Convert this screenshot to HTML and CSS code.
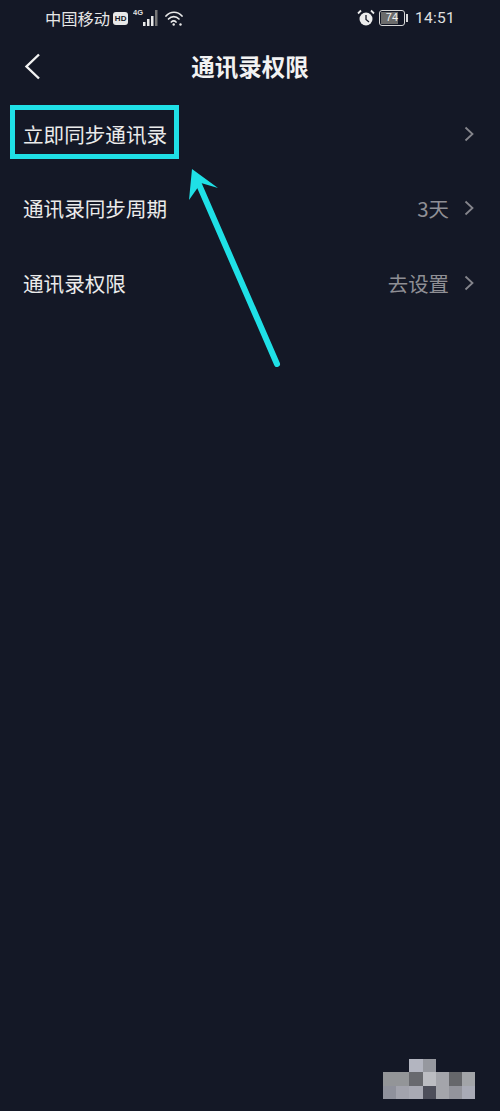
FILE: index.html
```html
<!DOCTYPE html>
<html lang="zh">
<head>
<meta charset="utf-8">
<title>通讯录权限</title>
<link rel="stylesheet" href="styles.css">
</head>
<body>
<div class="screen">
  <div class="status">
    <div class="status-left">
      <span class="carrier">中国移动</span>
      <span class="hd">HD</span>
      <svg class="signal" width="27" height="20" viewBox="0 0 27 20">
        <text x="0" y="7" class="net">4G</text>
        <rect x="10" y="14" width="2.500" height="4" fill="#e8e8e8"/>
        <rect x="14" y="11" width="2.500" height="7" fill="#e8e8e8"/>
        <rect x="18" y="8" width="2.500" height="10" fill="#e8e8e8"/>
        <rect x="22" y="2" width="2.500" height="16" fill="#777"/>
      </svg>
      <svg class="wifi" width="19" height="17" viewBox="0 0 19 17" fill="none" stroke="#e8e8e8" stroke-width="1.700" stroke-linecap="round">
        <path d="M1 6C5.500 1 12.500 1 17 6"/>
        <path d="M3.500 9C6.500 5.800 11 5.800 14 9"/>
        <path d="M6.300 12C7.800 10.500 9.700 10.500 11 12"/>
        <circle cx="8.700" cy="14.500" r="1.200" fill="#e8e8e8" stroke="none"/>
        <circle cx="15.500" cy="14.500" r="1.200" fill="#e8e8e8" stroke="none"/>
      </svg>
    </div>
    <div class="status-right">
      <svg class="alarm" width="18" height="18" viewBox="0 0 18 18">
        <circle cx="9" cy="10" r="6.500" fill="#ececec"/>
        <path d="M9 6V10.500L12 13" fill="none" stroke="#141826" stroke-width="1.300"/>
        <path d="M1 4.500L4 1.500M17 4.500L14 1.500" stroke="#ececec" stroke-width="1.800"/>
      </svg>
      <div class="battery-wrap">
        <div class="battery"><span class="battery-fill"></span><span class="battery-num">74</span></div>
        <span class="battery-cap"></span>
      </div>
      <span class="clock">14:51</span>
    </div>
  </div>

  <header class="nav">
    <svg class="back" width="17" height="27" viewBox="0 0 17 27" fill="none" stroke="#f2f2f2" stroke-width="2.400">
      <path d="M15 1.500L2.500 13.500L15 25.500"/>
    </svg>
    <h1 class="title">通讯录权限</h1>
  </header>

  <ul class="list">
    <li class="row"><span class="label">立即同步通讯录</span><span class="right"><svg class="chev" width="10" height="16" viewBox="0 0 10 16"><path d="M1.500 1.500L8.500 8L1.500 14.500"/></svg></span></li>
    <li class="row"><span class="label">通讯录同步周期</span><span class="right"><span class="value">3天</span><svg class="chev" width="10" height="16" viewBox="0 0 10 16"><path d="M1.500 1.500L8.500 8L1.500 14.500"/></svg></span></li>
    <li class="row"><span class="label">通讯录权限</span><span class="right"><span class="value">去设置</span><svg class="chev" width="10" height="16" viewBox="0 0 10 16"><path d="M1.500 1.500L8.500 8L1.500 14.500"/></svg></span></li>
  </ul>

  <div class="highlight"></div>
  <svg class="arrow" width="110" height="210" viewBox="0 0 110 210">
    <path d="M94 196L14 12" fill="none" stroke="#1fe0e6" stroke-width="6" stroke-linecap="round"/>
    <path d="M9 1L35 20L18 15L6 32Z" fill="#1fe0e6"/>
  </svg>

  <div class="mosaic">
    <i class="m-empty"></i><i class="m-empty"></i><i class="c1"></i><i class="c2"></i><i class="m-empty"></i><i class="m-empty"></i><i class="m-empty"></i>
    <i class="c3"></i><i class="c3"></i><i class="c4"></i><i class="c5"></i><i class="c6"></i><i class="c7"></i><i class="c8"></i>
    <i class="c9"></i><i class="c10"></i><i class="c11"></i><i class="c12"></i><i class="c6"></i><i class="c13"></i><i class="c14"></i>
  </div>
</div>
</body>
</html>
```
FILE: styles.css
```css
* { box-sizing: border-box; }
html, body { margin: 0; padding: 0; }
body {
  background: #141826;
  font-family: "Noto Sans CJK SC", "Noto Sans", sans-serif;
  color: #ececec;
}
.screen {
  position: relative;
  width: 500px;
  height: 1111px;
  overflow: hidden;
  background: #141826;
}
.status {
  height: 36px;
  padding: 0 45px 0 45px;
  display: flex;
  align-items: center;
  justify-content: space-between;
}
.status-left, .status-right { display: flex; align-items: center; }
.carrier { font-size: 16.300px; line-height: 20px; color: #e6e6e6; }
.hd {
  margin-left: 3px;
  width: 15px;
  height: 13px;
  border-radius: 3px;
  background: #e8e8e8;
  color: #141826;
  font: 700 8px/13px "Liberation Sans", sans-serif;
  text-align: center;
}
.signal { margin-left: 5px; }
.net { font: 700 7.500px "Liberation Sans", sans-serif; fill: #e0e0e0; }
.wifi { margin-left: 5px; }
.alarm { margin-right: 4px; }
.battery-wrap { display: flex; align-items: center; margin-right: 7px; }
.battery {
  position: relative;
  width: 26px;
  height: 16px;
  border: 1.500px solid #d8d8d8;
  border-radius: 3px;
  overflow: hidden;
}
.battery-fill {
  position: absolute;
  left: 1px;
  top: 1px;
  bottom: 1px;
  width: 72%;
  background: #6b6b6b;
}
.battery-num {
  position: relative;
  display: block;
  text-align: center;
  font: 11px/13px "Liberation Sans", sans-serif;
  color: #f0f0f0;
}
.battery-cap { width: 2px; height: 8px; margin-left: 1px; background: #d8d8d8; }
.clock { font: 15.500px/20px Roboto, sans-serif; color: #e0e0e0; letter-spacing: 0.3px; }

.nav {
  position: relative;
  height: 60.500px;
  display: flex;
  align-items: center;
  justify-content: center;
}
.back { position: absolute; left: 24px; top: 17px; }
.title {
  margin: 0;
  font-size: 23.500px;
  line-height: 60px;
  font-weight: 700;
  color: #f2f2f2;
}
.list { list-style: none; margin: 0; padding: 0; }
.row {
  height: 74.500px;
  padding: 0 26px 0 23px;
  display: flex;
  align-items: center;
  justify-content: space-between;
}
.label { font-size: 20.600px; line-height: 30px; color: #ebebeb; }
.right { display: flex; align-items: center; gap: 15px; }
.value { font-size: 20.400px; line-height: 30px; color: #8f8f95; }
.chev { fill: none; stroke: #85858c; stroke-width: 1.800; display: block; }

.highlight {
  position: absolute;
  left: 10px;
  top: 105px;
  width: 169px;
  height: 54px;
  border: 5.500px solid #1fe0e6;
}
.arrow { position: absolute; left: 183px; top: 168px; }

.mosaic {
  position: absolute;
  left: 383px;
  top: 1059px;
  display: grid;
  grid-template-columns: repeat(7, 13.200px);
  grid-auto-rows: 13.300px;
}
.m-empty { background: transparent; }
.c1 { background: #b3b5c0; }
.c2 { background: #96989f; }
.c3 { background: #939598; }
.c4 { background: #68696e; }
.c5 { background: #bcbdc2; }
.c6 { background: #a4a5ab; }
.c7 { background: #66676b; }
.c8 { background: #a2a4a8; }
.c9 { background: #8f919c; }
.c10 { background: #a2a3ad; }
.c11 { background: #a9aab4; }
.c12 { background: #4d4e5a; }
.c13 { background: #93949c; }
.c14 { background: #a8aab6; }
```
